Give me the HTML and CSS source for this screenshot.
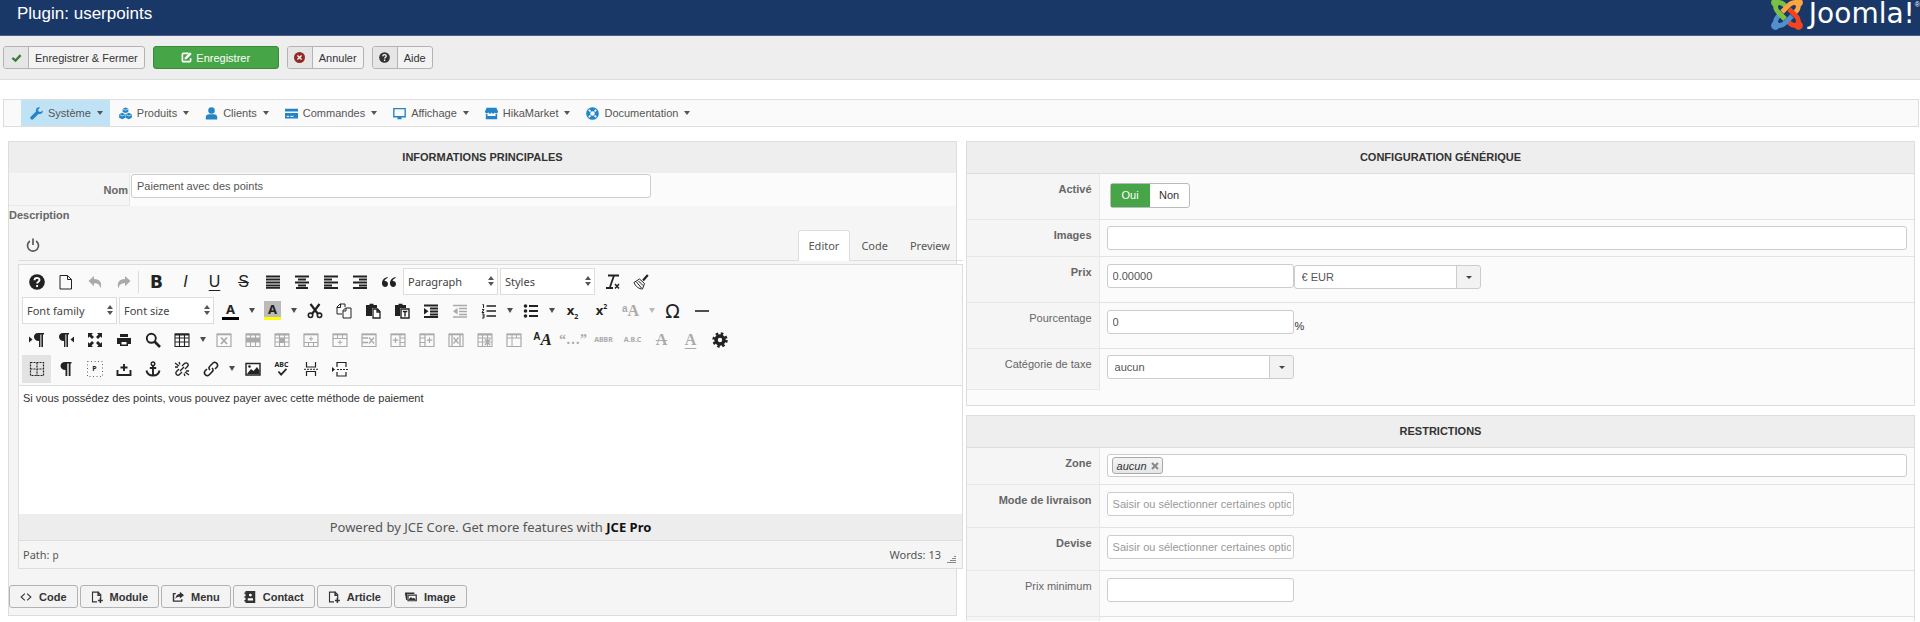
FILE: index.html
```
<!DOCTYPE html>
<html lang="fr">
<head>
    <meta charset="UTF-8">
    <title>Plugin: userpoints</title>
    <meta name="viewport" content="width=device-width, initial-scale=1.0">
    <link rel="stylesheet" href="styles.css">
</head>
<body>
    <!-- icon sprite -->
    <svg class="sprite" aria-hidden="true">
        <symbol id="check" viewBox="0 0 16 16"><path d="M2 8.500 6.500 12.500 14 4.500" fill="none" stroke="currentColor" stroke-width="3.400"/></symbol>
        <symbol id="edit" viewBox="0 0 16 16"><path d="M11 2H3.500A1.500 1.500 0 0 0 2 3.500v9A1.500 1.500 0 0 0 3.500 14h9a1.500 1.500 0 0 0 1.500-1.500V9" fill="none" stroke="currentColor" stroke-width="2.400"/><path d="M5 11l1-3.500L13 .5 15.500 3l-7 7z" fill="currentColor"/></symbol>
        <symbol id="cancel" viewBox="0 0 16 16"><circle cx="8" cy="8" r="8" fill="currentColor"/><path d="M5 5l6 6M11 5l-6 6" stroke="#fff" stroke-width="1.800"/></symbol>
        <symbol id="help" viewBox="0 0 16 16"><circle cx="8" cy="8" r="7.800" fill="currentColor"/><path d="M5.500 6.300C5.500 3 10.600 3.200 10.500 6c0 1.700-2.400 1.700-2.400 3.600M8.100 11v2" fill="none" stroke="#fff" stroke-width="1.900"/></symbol>
        <symbol id="wrench" viewBox="0 0 16 16"><path d="M15.600 4.200 13 6.200 10.400 5.400 10 3 12.400.6C9.500-.3 6.500 2 7.400 5.600L.6 12.200c-1.300 1.700 1.200 4.400 3.200 3l6.600-6.700c3.500 1 6-1.500 5.200-4.300z" fill="currentColor"/></symbol>
        <symbol id="cubes" viewBox="0 0 16 16"><path d="M8 .5l3.500 1.500v4L8 7.500 4.500 6V2zM4 7 7.800 8.800v4.400L4 15 .2 13.200V8.800zM12 7l3.800 1.800v4.400L12 15l-3.800-1.800V8.800z" fill="currentColor"/><path d="M4.800 2.500 8 4l3.200-1.500M.8 9.500 4 11l3.300-1.500M8.800 9.500 12 11l3.300-1.500" fill="none" stroke="#fff" stroke-width=".8"/></symbol>
        <symbol id="user" viewBox="0 0 16 16"><circle cx="8" cy="4.200" r="4" fill="currentColor"/><path d="M1 15.500v-3C1 10 3 9 5 9h6c2 0 4 1 4 3.500v3z" fill="currentColor"/></symbol>
        <symbol id="card" viewBox="0 0 16 16"><path d="M0 2h16v3.500H0zM0 7.500h16V14H0z" fill="currentColor"/><path d="M2 11.500h3M6.500 11.500h4" stroke="#fff" stroke-width="1.200"/></symbol>
        <symbol id="screen" viewBox="0 0 16 16"><path d="M1 2h14v10H1z" fill="none" stroke="currentColor" stroke-width="1.700"/><path d="M6 12h4l.8 3H5.200z" fill="currentColor"/></symbol>
        <symbol id="shop" viewBox="0 0 16 16"><path d="M2 1h12l2 4.500c0 3-4 3-4 .8 0 2.500-4 2.500-4 0 0 2.500-4 2.500-4 0 0 2.200-4 2.200-4-.8zM1 8.500h2V11h10V8.500h2V15H1z" fill="currentColor"/></symbol>
        <symbol id="ring" viewBox="0 0 16 16"><circle cx="8" cy="8" r="5.300" fill="none" stroke="currentColor" stroke-width="5"/><path d="M3.500 3.500l2 2M12.500 3.500l-2 2M3.500 12.500l2-2M12.500 12.500l-2-2" stroke="#fff" stroke-width="2"/></symbol>
        <symbol id="power" viewBox="0 0 16 16"><path d="M4.500 3.500a6.300 6.300 0 1 0 7 0M8 .5v7.500" fill="none" stroke="currentColor" stroke-width="1.900"/></symbol>
        <symbol id="page" viewBox="0 0 16 16"><path d="M2 1.500h7.500l4 4v9.500H2zM9.500 1.500v4h4" fill="none" stroke="currentColor"/></symbol>
        <symbol id="undo" viewBox="0 0 16 16"><path d="M7 2v3c6 0 8.500 4 6.500 9.500C13 11 11 9.200 7 9.200v3L1.500 7z" fill="currentColor"/></symbol>
        <symbol id="redo" viewBox="0 0 16 16"><path d="M9 2v3C3 5 .5 9 2.500 14.500 3 11 5 9.200 9 9.200v3L14.500 7z" fill="currentColor"/></symbol>
        <symbol id="justify" viewBox="0 0 16 16"><path d="M1 2.500h14M1 5.500h14M1 8.500h14M1 11.500h14M1 13.800h14" stroke="currentColor" stroke-width="1.800"/></symbol>
        <symbol id="center" viewBox="0 0 16 16"><path d="M1 2.500h14M4 5.500h8M1 8.500h14M4 11.500h8M2 14h12" stroke="currentColor" stroke-width="1.800"/></symbol>
        <symbol id="left" viewBox="0 0 16 16"><path d="M1 2.500h14M1 5.500h8M1 8.500h14M1 11.500h8M1 14h14" stroke="currentColor" stroke-width="1.800"/></symbol>
        <symbol id="right" viewBox="0 0 16 16"><path d="M1 2.500h14M7 5.500h8M1 8.500h14M7 11.500h8M1 14h14" stroke="currentColor" stroke-width="1.800"/></symbol>
        <symbol id="quote" viewBox="0 0 16 16"><path d="M6.500 3C2.500 4 1 6.500 1 9.500 1 14 7 14 7 10c0-2-1.500-3.200-3.400-3C3.800 5.500 5 4.500 6.700 4zM14.500 3C10.500 4 9 6.500 9 9.500c0 4.500 6 4.500 6 .5 0-2-1.500-3.200-3.400-3 .2-1.500 1.400-2.500 3.100-3z" fill="currentColor"/></symbol>
        <symbol id="clear" viewBox="0 0 16 16"><path d="M4 1.500h11M10 1.500 6 13M2 14h7" fill="none" stroke="currentColor" stroke-width="1.800"/><path d="M11 10l4 4.500M15 10l-4 4.500" stroke="currentColor" stroke-width="1.500"/></symbol>
        <symbol id="brush" viewBox="0 0 16 16"><path d="M14.800 1 10 6.500" stroke="currentColor" stroke-width="2.200"/><path d="M6.500 5l5 4.500-2 5.500C6 15 2.500 12.500 1 8.500zM3.500 8l5 6M5.500 7l4.500 4.500" fill="none" stroke="currentColor"/></symbol>
        <symbol id="cut" viewBox="0 0 16 16"><path d="M3.500 1 11 11M12.500 1 5 11" stroke="currentColor" stroke-width="2.200"/><circle cx="3.500" cy="12.300" r="2.200" fill="none" stroke="currentColor" stroke-width="1.600"/><circle cx="12.500" cy="12.300" r="2.200" fill="none" stroke="currentColor" stroke-width="1.600"/></symbol>
        <symbol id="copy" viewBox="0 0 16 16"><path d="M6 11H1V4l3-3h5v3M4.500 1v3.500H1M7 7.500 9.500 5H15v10H7zM10 5v3H7" fill="none" stroke="currentColor"/></symbol>
        <symbol id="paste" viewBox="0 0 16 16"><path d="M1 2h3.500V.8h4V2H12v3H7v8H1z" fill="currentColor"/><path d="M8 6h4.500L15 8.500V15H8zM12 6v3h3" fill="#fff" stroke="currentColor" stroke-width="1.300"/></symbol>
        <symbol id="pastetext" viewBox="0 0 16 16"><path d="M1 2h3.500V.8h4V2H12v3H6v8H1z" fill="currentColor"/><path d="M7 6h8v9H7z" fill="#fff" stroke="currentColor" stroke-width="1.400"/><path d="M8.800 8.500h4.500M11 8.500v5" stroke="currentColor" stroke-width="1.400"/></symbol>
        <symbol id="indent" viewBox="0 0 16 16"><path d="M1 2.500h14M7 5.500h8M7 8.500h8M7 11.500h8M1 14h14" stroke="currentColor" stroke-width="1.800"/><path d="M1 5l4.500 3.300L1 11.500z" fill="currentColor"/></symbol>
        <symbol id="outdent" viewBox="0 0 16 16"><path d="M1 2.500h14M7 5.500h8M7 8.500h8M7 11.500h8M1 14h14" stroke="currentColor" stroke-width="1.500"/><path d="M5.500 5 1 8.300l4.500 3.200z" fill="currentColor"/></symbol>
        <symbol id="ol" viewBox="0 0 16 16"><path d="M5.500 3H15M5.500 8H15M5.500 13H15" stroke="currentColor" stroke-width="1.700"/><path d="M1.500 1.500h1V5M1 6.500h2L1 9.500h2.200M1 11h2v4H1M3 13H1.500" fill="none" stroke="currentColor"/></symbol>
        <symbol id="ul" viewBox="0 0 16 16"><path d="M6 3h9M6 8h9M6 13h9" stroke="currentColor" stroke-width="1.900"/><circle cx="2.500" cy="3" r="1.800" fill="currentColor"/><circle cx="2.500" cy="8" r="1.800" fill="currentColor"/><circle cx="2.500" cy="13" r="1.800" fill="currentColor"/></symbol>
        <symbol id="hr" viewBox="0 0 16 16"><path d="M1 8h14" stroke="currentColor" stroke-width="1.600"/></symbol>
        <symbol id="ltr" viewBox="0 0 16 16"><path d="M0 4.500 3.500 7.500 0 10.500z" fill="currentColor"/><path d="M10 9C3.500 9 3.500 1 9 1h6v1.500h-1V15h-1.600V2.500h-1V15H10z" fill="currentColor"/></symbol>
        <symbol id="rtl" viewBox="0 0 16 16"><path d="M16 4.500 12.500 7.500 16 10.500z" fill="currentColor"/><path d="M6 9C-.5 9-.5 1 5 1h6v1.500h-1V15H8.400V2.500h-1V15H6z" fill="currentColor"/></symbol>
        <symbol id="para" viewBox="0 0 16 16"><path d="M7.500 9C1 9 1 1 7 1h6.500v1.500h-1V15h-1.800V2.500H9.300V15H7.500z" fill="currentColor"/></symbol>
        <symbol id="full" viewBox="0 0 16 16"><path d="M1 1h5L4.500 2.500 7 5 5 7 2.500 4.500 1 6zM15 1v5l-1.500-1.500L11 7 9 5l2.500-2.500L10 1zM1 15v-5l1.500 1.500L5 9l2 2-2.500 2.500L6 15zM15 15h-5l1.500-1.500L9 11l2-2 2.500 2.500L15 10z" fill="currentColor"/></symbol>
        <symbol id="print" viewBox="0 0 16 16"><path d="M4 2h8v3H4zM1 6h14v6h-3v2H4v-2H1z" fill="currentColor"/><path d="M5.500 10h5v2.500h-5z" fill="#fff"/></symbol>
        <symbol id="search" viewBox="0 0 16 16"><circle cx="6.300" cy="6.300" r="4.500" fill="none" stroke="currentColor" stroke-width="1.900"/><path d="M9.500 9.500 15 15" stroke="currentColor" stroke-width="2.600"/></symbol>
        <symbol id="table" viewBox="0 0 16 16"><path d="M1 2h14v12.500H1zM1 6h14M1 10h14M5.500 2v12.500M10.500 2v12.500" fill="none" stroke="currentColor" stroke-width="1.100"/><path d="M1 2.500h14" stroke="currentColor" stroke-width="2"/></symbol>
        <symbol id="frame" viewBox="0 0 16 16"><path d="M1 2h14v12.500H1z" fill="none" stroke="currentColor" stroke-width="1.200"/><path d="M1 2.500h14" stroke="currentColor" stroke-width="1.600"/></symbol>
        <symbol id="tdel" viewBox="0 0 16 16"><use href="#frame"/><path d="M5 5.500l6 6.500M11 5.500 5 12" stroke="currentColor" stroke-width="1.800"/></symbol>
        <symbol id="trow" viewBox="0 0 16 16"><use href="#table"/><path d="M1 6h14v4H1z" fill="currentColor"/></symbol>
        <symbol id="tcell" viewBox="0 0 16 16"><use href="#table"/><path d="M5 6h6v5H5z" fill="currentColor"/></symbol>
        <symbol id="rowbefore" viewBox="0 0 16 16"><use href="#frame"/><path d="M1 10.500h14M5.500 10.500v4M10.500 10.500v4M8 4.500v4.500M5.800 6.800h4.500" stroke="currentColor"/></symbol>
        <symbol id="rowafter" viewBox="0 0 16 16"><use href="#frame"/><path d="M1 6.500h14M5.500 2v4.500M10.500 2v4.500M8 8v4.500M5.800 10.300h4.500" stroke="currentColor"/></symbol>
        <symbol id="rowdel" viewBox="0 0 16 16"><use href="#frame"/><path d="M1 6h6M1 10.500h6M8 5.500l5 6M13 5.500l-5 6" stroke="currentColor" stroke-width="1.300"/></symbol>
        <symbol id="colbefore" viewBox="0 0 16 16"><use href="#frame"/><path d="M10 2v12.500M10 6h5M10 10.500h5M5.500 5.500v5.500M2.800 8.200h5.500" stroke="currentColor" stroke-width="1.200"/></symbol>
        <symbol id="colafter" viewBox="0 0 16 16"><use href="#frame"/><path d="M6 2v12.500M1 6h5M1 10.500h5M10.500 5.500v5.500M7.800 8.200h5.500" stroke="currentColor" stroke-width="1.200"/></symbol>
        <symbol id="coldel" viewBox="0 0 16 16"><use href="#frame"/><path d="M4 2v12.500M12 2v12.500M5.500 5.500l5 6M10.500 5.500l-5 6" stroke="currentColor" stroke-width="1.300"/></symbol>
        <symbol id="split" viewBox="0 0 16 16"><use href="#table"/><path d="M8 7l5 6M13 7l-5 6" stroke="currentColor" stroke-width="1.500"/></symbol>
        <symbol id="merge" viewBox="0 0 16 16"><use href="#frame"/><path d="M1 6h14M6 2v12.500M10.500 2v4" stroke="currentColor"/></symbol>
        <symbol id="gear" viewBox="0 0 16 16"><circle cx="8" cy="8" r="4" fill="none" stroke="currentColor" stroke-width="3.600"/><circle cx="8" cy="8" r="6.400" fill="none" stroke="currentColor" stroke-width="2.600" stroke-dasharray="2.500 2.526"/></symbol>
        <symbol id="guides" viewBox="0 0 16 16"><path d="M1.500 1.500h13v13h-13zM1.500 8h13M8 1.500v13" fill="none" stroke="currentColor" stroke-width="1.200" stroke-dasharray="2 1"/></symbol>
        <symbol id="blocks" viewBox="0 0 16 16"><path d="M.5.500h15v15H.5z" fill="none" stroke="currentColor" stroke-dasharray="1 2.500" opacity=".7"/></symbol>
        <symbol id="nbsp" viewBox="0 0 16 16"><path d="M1.500 9v5h13V9M8 3v7M4.500 6.500h7" fill="none" stroke="currentColor" stroke-width="1.900"/></symbol>
        <symbol id="anchor" viewBox="0 0 16 16"><circle cx="8" cy="2.800" r="1.800" fill="none" stroke="currentColor" stroke-width="1.400"/><path d="M8 4.500v10M4.800 7h6.400M1.500 9.500c.5 3 3 5 6.500 5s6-2 6.500-5" fill="none" stroke="currentColor" stroke-width="1.900"/></symbol>
        <symbol id="link" viewBox="0 0 16 16"><path d="M7 9C5 7 6 6 8 4l2-2c2-2 6 1 4 4l-2 2M9 7c2 2 1 3-1 5l-2 2c-2 2-6-1-4-4l2-2" fill="none" stroke="currentColor" stroke-width="1.600"/></symbol>
        <symbol id="unlink" viewBox="0 0 16 16"><path d="M8 5l2.500-2.500c2-2 5 1 3 3L11 8M8 11l-2.500 2.500c-2 2-5-1-3-3L5 8M1 2l4 3M5 1l1 2.500M1 6h3M15 14l-4-3M11 15l-1-2.500M15 10h-3M10 6 6 10" fill="none" stroke="currentColor" stroke-width="1.300"/></symbol>
        <symbol id="image" viewBox="0 0 16 16"><path d="M1 2.500h14v11.500H1z" fill="none" stroke="currentColor" stroke-width="1.400"/><path d="M2 13l4-5 2.500 2L12 6l2.500 3.500V13z" fill="currentColor"/><circle cx="4.500" cy="5.500" r="1.300" fill="currentColor"/></symbol>
        <symbol id="tick" viewBox="0 0 16 9"><path d="M4 4l3 3.500L13 1" fill="none" stroke="currentColor" stroke-width="1.900"/></symbol>
        <symbol id="break" viewBox="0 0 16 16"><path d="M3.500 1v5h9V1M3.500 15v-4.500h9V15" fill="none" stroke="currentColor" stroke-width="1.200"/><path d="M1 8.300h14" stroke="currentColor" stroke-dasharray="2 1"/></symbol>
        <symbol id="readmore" viewBox="0 0 16 16"><path d="M5 6V1.500h9V6M5 11v4h9v-4" fill="none" stroke="currentColor" stroke-width="1.200"/><path d="M5 8.500h11" stroke="currentColor" stroke-dasharray="2 1"/><path d="M0 6l3 2.500L0 11z" fill="currentColor"/></symbol>
        <symbol id="code" viewBox="0 0 16 16"><path d="M6.500 3.500 1.500 8l5 4.500M9.500 3.500l5 4.500-5 4.500" fill="none" stroke="currentColor" stroke-width="1.400"/></symbol>
        <symbol id="fileadd" viewBox="0 0 16 16"><path d="M8 14.500H2v-13h7.500l3.500 3.500v5" fill="none" stroke="currentColor" stroke-width="1.500"/><path d="M9.500 1v4.500H13M12.500 9v7M9.200 12.500h6.600" fill="none" stroke="currentColor" stroke-width="2"/></symbol>
        <symbol id="share" viewBox="0 0 16 16"><path d="M5 3.500H2v10h11V11" fill="none" stroke="currentColor" stroke-width="1.900"/><path d="M10.500 1 16 5.500 10.500 10V7.500C8 7.500 6 8 4.500 10.500 5 6 7 3.800 10.500 3.500z" fill="currentColor"/></symbol>
        <symbol id="book" viewBox="0 0 16 16"><path d="M2 0h13v16H2v-2H.5v-2H2V9H.5V7H2V4H.5V2H2z" fill="currentColor"/><path d="M8.500 3.500a1.900 1.900 0 1 1 0 3.900 1.900 1.900 0 0 1 0-3.900M5 12.500V9.500h7v3z" fill="#fff"/></symbol>
        <symbol id="pics" viewBox="0 0 16 16"><path d="M0 2h12.500v2H3v8H1.500L0 4z" fill="currentColor"/><path d="M4 5.500h11V13H4z" fill="none" stroke="currentColor" stroke-width="1.600"/><path d="M5 11l3-3 2 2 2-1 2.500 3H5z" fill="currentColor"/></symbol>
        <symbol id="arm" viewBox="0 0 32 32"><path d="M4.500 4.500C4 12 6 13 9 16l5 5M4.500 4.500C11 4 12.500 6 15 8.500" fill="none" stroke="currentColor" stroke-width="4.800"/><circle cx="4.500" cy="4.500" r="4.400" fill="currentColor"/></symbol>
    </svg>

    <header class="header">
        <h1>Plugin: userpoints</h1>
        <div class="logo">
            <svg viewBox="0 0 32 32">
                <use href="#arm" color="#7ac143"/>
                <use href="#arm" color="#f9a541" transform="rotate(90 16 16)"/>
                <use href="#arm" color="#f44321" transform="rotate(180 16 16)"/>
                <use href="#arm" color="#5091cd" transform="rotate(270 16 16)"/>
                <path d="M7 14l7 7" stroke="#7ac143" stroke-width="4.800"/>
            </svg>
            <span>Joomla!</span><sup>®</sup>
        </div>
    </header>

    <div class="subhead">
        <button class="btn btn-green-check"><span class="btn-icon"><svg><use href="#check"/></svg></span><span class="btn-text">Enregistrer &amp; Fermer</span></button>
        <button class="btn btn-success"><svg><use href="#edit"/></svg>Enregistrer</button>
        <button class="btn btn-cancel"><span class="btn-icon"><svg><use href="#cancel"/></svg></span><span class="btn-text">Annuler</span></button>
        <button class="btn"><span class="btn-icon"><svg><use href="#help"/></svg></span><span class="btn-text">Aide</span></button>
    </div>

    <nav class="menu">
        <a href="#" class="active"><svg><use href="#wrench"/></svg>Système</a>
        <a href="#"><svg><use href="#cubes"/></svg>Produits</a>
        <a href="#"><svg><use href="#user"/></svg>Clients</a>
        <a href="#"><svg><use href="#card"/></svg>Commandes</a>
        <a href="#"><svg><use href="#screen"/></svg>Affichage</a>
        <a href="#"><svg><use href="#shop"/></svg>HikaMarket</a>
        <a href="#"><svg><use href="#ring"/></svg>Documentation</a>
    </nav>

    <main class="columns">
        <section class="panel">
            <h2>INFORMATIONS PRINCIPALES</h2>
            <div class="name-row">
                <label for="name">Nom</label>
                <div><input type="text" id="name" value="Paiement avec des points"></div>
            </div>
            <div class="description">Description</div>

            <div class="editor-wrap">
                <div class="tabs">
                    <button class="power" aria-label="Toggle"><svg><use href="#power"/></svg></button>
                    <button class="tab current">Editor</button>
                    <button class="tab">Code</button>
                    <button class="tab">Preview</button>
                </div>
                <div class="editor">
                    <div class="toolbar">
                        <div class="tools">
                            <button><svg><use href="#help"/></svg></button>
                            <button><svg><use href="#page"/></svg></button>
                            <button class="off"><svg><use href="#undo"/></svg></button>
                            <button class="off"><svg><use href="#redo"/></svg></button>
                            <span class="sep"></span>
                            <button class="g-bold">B</button>
                            <button class="g-italic">I</button>
                            <button class="g-under">U</button>
                            <button class="g-strike">S</button>
                            <button><svg><use href="#justify"/></svg></button>
                            <button><svg><use href="#center"/></svg></button>
                            <button><svg><use href="#left"/></svg></button>
                            <button><svg><use href="#right"/></svg></button>
                            <button><svg><use href="#quote"/></svg></button>
                            <span class="list"><select aria-label="Format"><option>Paragraph</option></select></span>
                            <span class="list"><select aria-label="Styles"><option>Styles</option></select></span>
                            <button><svg><use href="#clear"/></svg></button>
                            <button><svg><use href="#brush"/></svg></button>
                        </div>
                        <div class="tools">
                            <span class="list"><select aria-label="Font family"><option>Font family</option></select></span>
                            <span class="list"><select aria-label="Font size"><option>Font size</option></select></span>
                            <button><span class="color">A</span></button><button class="more"></button>
                            <button><span class="color mark">A</span></button><button class="more"></button>
                            <button><svg><use href="#cut"/></svg></button>
                            <button><svg><use href="#copy"/></svg></button>
                            <button><svg><use href="#paste"/></svg></button>
                            <button><svg><use href="#pastetext"/></svg></button>
                            <button><svg><use href="#indent"/></svg></button>
                            <button class="off"><svg><use href="#outdent"/></svg></button>
                            <button><svg><use href="#ol"/></svg></button><button class="more"></button>
                            <button><svg><use href="#ul"/></svg></button><button class="more"></button>
                            <button class="g-x">x<sub>2</sub></button>
                            <button class="g-x">x<sup>2</sup></button>
                            <button class="g-case off"><small>a</small>A</button><button class="more off"></button>
                            <button class="g-omega">Ω</button>
                            <button><svg><use href="#hr"/></svg></button>
                        </div>
                        <div class="tools">
                            <button><svg><use href="#ltr"/></svg></button>
                            <button><svg><use href="#rtl"/></svg></button>
                            <button><svg><use href="#full"/></svg></button>
                            <button><svg><use href="#print"/></svg></button>
                            <button><svg><use href="#search"/></svg></button>
                            <button><svg><use href="#table"/></svg></button><button class="more"></button>
                            <button class="off"><svg><use href="#tdel"/></svg></button>
                            <button class="off"><svg><use href="#trow"/></svg></button>
                            <button class="off"><svg><use href="#tcell"/></svg></button>
                            <button class="off"><svg><use href="#rowbefore"/></svg></button>
                            <button class="off"><svg><use href="#rowafter"/></svg></button>
                            <button class="off"><svg><use href="#rowdel"/></svg></button>
                            <button class="off"><svg><use href="#colbefore"/></svg></button>
                            <button class="off"><svg><use href="#colafter"/></svg></button>
                            <button class="off"><svg><use href="#coldel"/></svg></button>
                            <button class="off"><svg><use href="#split"/></svg></button>
                            <button class="off"><svg><use href="#merge"/></svg></button>
                            <button class="g-style"><small>A</small><i>A</i></button>
                            <button class="g-quotes off">“…”</button>
                            <button class="g-abbr off">ABBR</button>
                            <button class="g-abbr off">A.B.C</button>
                            <button class="g-del off">A</button>
                            <button class="g-ins off">A</button>
                            <button><svg><use href="#gear"/></svg></button>
                        </div>
                        <div class="tools">
                            <button class="on"><svg><use href="#guides"/></svg></button>
                            <button><svg><use href="#para"/></svg></button>
                            <button class="g-blocks"><svg><use href="#blocks"/></svg><b>P</b></button>
                            <button><svg><use href="#nbsp"/></svg></button>
                            <button><svg><use href="#anchor"/></svg></button>
                            <button><svg><use href="#unlink"/></svg></button>
                            <button><svg><use href="#link"/></svg></button><button class="more"></button>
                            <button><svg><use href="#image"/></svg></button>
                            <button class="g-spell"><b>ABC</b><svg><use href="#tick"/></svg></button>
                            <button><svg><use href="#break"/></svg></button>
                            <button><svg><use href="#readmore"/></svg></button>
                        </div>
                    </div>
                    <div class="content" contenteditable="true" spellcheck="false">Si vous possédez des points, vous pouvez payer avec cette méthode de paiement</div>
                    <div class="powered">Powered by JCE Core. Get more features with <b>JCE Pro</b></div>
                    <div class="status">
                        <span>Path: <small>p</small></span>
                        <span>Words: 13<svg class="grip" viewBox="0 0 9 9"><path d="M0 8.500h9M3 6.500h6M5 4.500h4M7 2.500h2" stroke="#888"/></svg></span>
                    </div>
                </div>
            </div>

            <div class="extras">
                <button class="btn"><svg><use href="#code"/></svg>Code</button>
                <button class="btn"><svg><use href="#fileadd"/></svg>Module</button>
                <button class="btn"><svg><use href="#share"/></svg>Menu</button>
                <button class="btn"><svg><use href="#book"/></svg>Contact</button>
                <button class="btn"><svg><use href="#fileadd"/></svg>Article</button>
                <button class="btn"><svg><use href="#pics"/></svg>Image</button>
            </div>
        </section>

        <div>
            <section class="panel options">
                <h2>CONFIGURATION GÉNÉRIQUE</h2>
                <div class="row tall">
                    <span class="label">Activé</span>
                    <div class="field">
                        <div class="toggle">
                            <input type="radio" name="enabled" id="yes" checked><label for="yes">Oui</label>
                            <input type="radio" name="enabled" id="no"><label for="no">Non</label>
                        </div>
                    </div>
                </div>
                <div class="row">
                    <label class="label" for="images">Images</label>
                    <div class="field"><input class="wide" type="text" id="images"></div>
                </div>
                <div class="row tall">
                    <label class="label" for="price">Prix</label>
                    <div class="field">
                        <input type="text" id="price" value="0.00000">
                        <span class="chosen"><select aria-label="Devise"><option>€ EUR</option></select></span>
                    </div>
                </div>
                <div class="row tall">
                    <label class="label light" for="percent">Pourcentage</label>
                    <div class="field"><input type="text" id="percent" value="0"><span class="unit">%</span></div>
                </div>
                <div class="row last">
                    <label class="label light" for="tax">Catégorie de taxe</label>
                    <div class="field"><span class="chosen"><select id="tax"><option>aucun</option></select></span></div>
                </div>
            </section>

            <section class="panel options open">
                <h2>RESTRICTIONS</h2>
                <div class="row">
                    <span class="label">Zone</span>
                    <div class="field">
                        <div class="tagbox"><span class="tag">aucun <button aria-label="Supprimer"><svg viewBox="0 0 8 8"><path d="M1 1l6 6M7 1 1 7" stroke="#888" stroke-width="2"/></svg></button></span></div>
                    </div>
                </div>
                <div class="row medium">
                    <label class="label" for="shipping">Mode de livraison</label>
                    <div class="field"><input type="text" id="shipping" placeholder="Saisir ou sélectionner certaines options"></div>
                </div>
                <div class="row medium">
                    <label class="label" for="currency">Devise</label>
                    <div class="field"><input type="text" id="currency" placeholder="Saisir ou sélectionner certaines options"></div>
                </div>
                <div class="row tall">
                    <label class="label light" for="min">Prix minimum</label>
                    <div class="field"><input type="text" id="min"></div>
                </div>
                <div class="row stub"><span class="label"></span></div>
            </section>
        </div>
    </main>
</body>
</html>
```

FILE: styles.css
```
* {
    box-sizing: border-box;
}
body {
    margin: 0;
    background: #fff;
    color: #555;
    font: 11px/16px "Liberation Sans", Arial, sans-serif;
    overflow: hidden;
}
button, input, select {
    font: inherit;
    color: inherit;
    margin: 0;
}
svg {
    display: block;
    width: 16px;
    height: 16px;
    flex: none;
}
.sprite {
    position: absolute;
    width: 0;
    height: 0;
}

/* top bar */
.header {
    display: flex;
    justify-content: space-between;
    align-items: center;
    height: 36px;
    padding: 0 0 8px 17px;
    background: #1a3867;
    border-bottom: 1px solid #4a6288;
    overflow: hidden;
}
.header h1 {
    margin: 0;
    font-size: 17px;
    font-weight: normal;
    color: #fff;
}
.logo {
    display: flex;
    align-items: center;
    color: #fff;
}
.logo svg {
    width: 32px;
    height: 32px;
    margin-right: 6px;
}
.logo span {
    font: 28px/26px "DejaVu Sans", sans-serif;
}
.logo sup {
    font-size: 7px;
    line-height: 8px;
    margin-top: 3px;
    align-self: flex-start;
}

.subhead {
    display: flex;
    gap: 8px;
    padding: 10px 3px;
    background: #eee;
    border-bottom: 1px solid #ddd;
}
.btn {
    display: flex;
    align-items: center;
    justify-content: center;
    height: 23px;
    padding: 0;
    background: #f3f3f3;
    border: 1px solid #b3b3b3;
    border-radius: 3px;
    color: #333;
    overflow: hidden;
}
.btn svg {
    width: 11px;
    height: 11px;
}
.btn-icon {
    display: flex;
    align-items: center;
    justify-content: center;
    width: 25px;
    height: 21px;
    background: #e6e6e6;
    border-right: 1px solid #b3b3b3;
}
.btn-text {
    padding: 0 6px;
}
.btn-green-check .btn-icon {
    color: #378137;
}
.btn-cancel .btn-icon {
    color: #942a25;
}
.btn-success {
    width: 126px;
    gap: 4px;
    background: #46a546;
    border-color: #3a8a3a;
    color: #fff;
}

/* component menu */
.menu {
    display: flex;
    margin: 19px 1px 14px 3px;
    padding-left: 17px;
    background: #fafafa;
    border: 1px solid #ddd;
}
.menu a {
    display: flex;
    align-items: center;
    gap: 5px;
    padding: 5px 7px 5px 9px;
    color: #555;
    text-decoration: none;
}
.menu a.active {
    background: #bfe2f5;
}
.menu a svg {
    width: 13px;
    height: 13px;
    color: #2384c6;
}
.menu a::after {
    content: "";
    margin-left: 1px;
    border: 3px solid transparent;
    border-top: 4px solid #555;
    border-bottom: 0;
}

/* panels */
.columns {
    display: grid;
    grid-template-columns: 1fr 1fr;
    gap: 9px;
    padding: 0 5px 0 8px;
    align-items: start;
}
.columns > * {
    min-width: 0;
}
.panel {
    background: #f5f5f5;
    border: 1px solid #ddd;
}
.panel h2 {
    margin: 0;
    padding: 7px 8px 8px;
    background: #eee;
    color: #333;
    font-size: 11px;
    line-height: 16px;
    text-align: center;
}
input[type="text"] {
    height: 24px;
    padding: 0 2px 0 5px;
    background: #fff;
    border: 1px solid #ccc;
    border-radius: 3px;
}
input::placeholder {
    color: #999;
}
.name-row {
    display: grid;
    grid-template-columns: 121px 1fr;
    background: #fbfbfb;
}
.name-row label {
    height: 33px;
    padding: 9px 1px 0 0;
    background: #f5f5f5;
    border-right: 1px solid #e8e8e8;
    border-bottom: 1px solid #e8e8e8;
    font-weight: bold;
    text-align: right;
    color: #666;
}
.name-row input {
    display: block;
    width: 63%;
    margin: 1px;
}
.description {
    padding-top: 1px;
    font-weight: bold;
    color: #666;
}

/* editor */
.editor-wrap {
    margin: 7px -7px 0 9px;
    font-family: "Noto Sans", sans-serif;
}
.tabs {
    position: relative;
    display: flex;
    align-items: flex-end;
    height: 31px;
    padding-right: 6px;
    border-bottom: 1px solid #ddd;
}
.tab {
    height: 30px;
    padding: 0 10px;
    background: none;
    border: 1px solid transparent;
    border-bottom: 0;
}
.tab:last-child {
    padding-right: 6px;
}
.tab.current {
    height: 31px;
    margin-bottom: -1px;
    background: #fff;
    border-color: #ddd;
    border-radius: 4px 4px 0 0;
}
.power {
    margin: 0 auto 8px 8px;
    padding: 0;
    background: none;
    border: 0;
}
.power svg {
    width: 14px;
    height: 14px;
}
.editor {
    position: relative;
    margin-top: 3px;
    background: #f5f5f5;
    border: 1px solid #ddd;
}
.toolbar {
    padding: 2px 3px;
    background: #fafafa;
    border-bottom: 1px solid #ddd;
}
.tools {
    display: flex;
    align-items: center;
    height: 29px;
}
.tools button {
    display: flex;
    align-items: center;
    justify-content: center;
    width: 29px;
    height: 28px;
    padding: 0;
    background: none;
    border: 0;
    color: #222;
}
.tools button svg {
    width: 16px;
    height: 16px;
}
.tools .off {
    color: #aaa;
}
.tools .on {
    background: #e3e3e3;
}
.tools .more {
    width: 13px;
}
.more::before {
    content: "";
    border: 3px solid transparent;
    border-top: 5px solid currentColor;
    border-bottom: 0;
    opacity: .8;
}
.sep {
    width: 4px;
    height: 22px;
    border-left: 1px solid #ddd;
}
.list {
    position: relative;
    width: 95px;
    margin-right: 2px;
}
.list select {
    display: block;
    width: 100%;
    height: 27px;
    padding: 0 4px;
    appearance: none;
    background: #fff;
    border: 1px solid #ddd;
    border-radius: 0;
    color: #444;
}
.list::before, .list::after {
    content: "";
    position: absolute;
    right: 4px;
    border: 3px solid transparent;
}
.list::before {
    top: 8px;
    border-bottom: 4px solid #555;
    border-top: 0;
}
.list::after {
    bottom: 9px;
    border-top: 4px solid #555;
    border-bottom: 0;
}

/* letter buttons */
.tools .g-bold {
    font: bold 17px "DejaVu Sans", sans-serif;
}
.tools .g-italic {
    font: italic 16px "Liberation Sans", sans-serif;
}
.tools .g-under {
    font: 16px "Liberation Sans", sans-serif;
    text-decoration: underline;
    text-underline-offset: 3px;
}
.tools .g-strike {
    font: 16px "Liberation Sans", sans-serif;
    text-decoration: line-through;
}
.tools .g-x {
    align-items: baseline;
    font: bold 13px/26px "Noto Sans", sans-serif;
}
.g-x sub, .g-x sup {
    font-size: 7px;
    line-height: 8px;
}
.g-x sub {
    transform: translateY(4px);
}
.g-x sup {
    transform: translateY(-6px);
}
.tools .g-case, .tools .g-del, .tools .g-ins {
    font: bold 16px "Liberation Serif", serif;
}
.g-case small {
    font: bold 10px "Liberation Sans", sans-serif;
    align-self: flex-start;
    margin-top: 6px;
}
.tools .g-omega {
    font: 19px "DejaVu Sans", sans-serif;
}
.tools .g-style {
    font: bold 17px "Liberation Serif", serif;
}
.g-style small {
    font: bold 10px "Liberation Sans", sans-serif;
    align-self: flex-start;
    margin-top: 5px;
}
.tools .g-quotes {
    width: 32px;
    font: bold 14px "Liberation Serif", serif;
}
.tools .g-abbr {
    font: bold 7px "Noto Sans", sans-serif;
}
.tools .g-del {
    text-decoration: line-through;
}
.tools .g-ins {
    text-decoration: underline;
    text-underline-offset: 3px;
}
.color {
    width: 17px;
    border-bottom: 3px solid #000;
    font: bold 13px/16px "Noto Sans", sans-serif;
}
.color.mark {
    background: #bbb;
    border-color: #ff0;
}
.tools .g-blocks {
    display: grid;
    place-items: center;
    place-content: center;
    font-size: 7px;
}
.g-blocks > * {
    grid-area: 1 / 1;
}
.tools .g-spell {
    flex-direction: column;
    font-size: 7px;
    line-height: 7px;
}
.tools .g-spell svg {
    height: 8px;
}

.content {
    height: 128px;
    padding: 4px;
    background: #fff;
    font-family: "Liberation Sans", Arial, sans-serif;
    color: #333;
}
.powered {
    padding: 5px;
    background: #ededed;
    border-bottom: 1px solid #ddd;
    font-size: 13px;
    text-align: center;
}
.powered b {
    color: #111;
}
.status {
    display: flex;
    justify-content: space-between;
    padding: 6px 6px 5px 4px;
}
.status small {
    font-size: 10px;
}
.grip {
    display: inline-block;
    width: 9px;
    height: 9px;
    margin-left: 6px;
    vertical-align: -4px;
}

.extras {
    display: flex;
    gap: 2px;
    padding: 16px 0 7px 0;
}
.extras .btn {
    padding: 0 10px;
    gap: 7px;
    font-weight: bold;
}
.extras svg {
    width: 12px;
    height: 12px;
}

/* option tables */
.options {
    background: #fbfbfb;
    padding-bottom: 15px;
}
.options.open {
    margin-top: 9px;
    padding-bottom: 0;
    border-bottom: 0;
}
.options h2 {
    border-bottom: 1px solid #ddd;
}
.row {
    display: grid;
    grid-template-columns: 14% 1fr;
    height: 37px;
}
.row .label {
    padding: 7px 7px 0 0;
    background: #f5f5f5;
    border-right: 1px solid #e8e8e8;
    border-bottom: 1px solid #e8e8e8;
    font-weight: bold;
    text-align: right;
    color: #666;
}
.row .label.light {
    font-weight: normal;
}
.row.medium {
    height: 43px;
}
.row.tall {
    height: 46px;
}
.row.last {
    height: 41px;
}
.row.stub {
    height: 4px;
}
.field {
    display: flex;
    align-items: flex-start;
    padding: 6px 7px 0;
    border-bottom: 1px solid #e2e2e2;
}
.medium .field, .tall .field {
    padding-top: 7px;
}
.last .field, .stub .label {
    border-bottom: 0;
}
.field input[type="text"] {
    width: 187px;
}
.field .wide, .tagbox {
    flex: 1;
}
.unit {
    padding: 8px 1px 0;
    color: #333;
}
.chosen {
    position: relative;
    width: 187px;
}
input + .chosen {
    margin-top: 1px;
}
.chosen select {
    display: block;
    width: 100%;
    height: 24px;
    padding: 0 30px 0 7px;
    appearance: none;
    background: linear-gradient(#ccc, #ccc) right 23px top / 1px 100% no-repeat, linear-gradient(#f2f2f2, #f2f2f2) right top / 23px 100% no-repeat, #fff;
    border: 1px solid #ccc;
    border-radius: 3px;
}
.chosen::after {
    content: "";
    position: absolute;
    right: 9px;
    top: 11px;
    border: 3px solid transparent;
    border-top-color: #444;
    border-bottom: 0;
}
.toggle {
    display: flex;
    margin: 2px 3px;
    border: 1px solid #bbb;
    border-radius: 3px;
    background: #fff;
}
.toggle input {
    position: absolute;
    opacity: 0;
}
.toggle label {
    width: 39px;
    line-height: 23px;
    text-align: center;
    color: #333;
}
.toggle input:checked + label {
    background: #46a546;
    color: #fff;
}
.tagbox {
    height: 23px;
    padding: 2px 4px;
    background: #fff;
    border: 1px solid #ccc;
    border-radius: 3px;
}
.tag {
    display: inline-flex;
    align-items: center;
    gap: 4px;
    height: 17px;
    padding: 0 3px 0 4px;
    background: linear-gradient(#f4f4f4, #e6e6e6);
    border: 1px solid #aaa;
    border-radius: 3px;
    font-style: italic;
    color: #333;
}
.tag button {
    padding: 0;
    background: none;
    border: 0;
}
.tag svg {
    width: 8px;
    height: 8px;
}
```
